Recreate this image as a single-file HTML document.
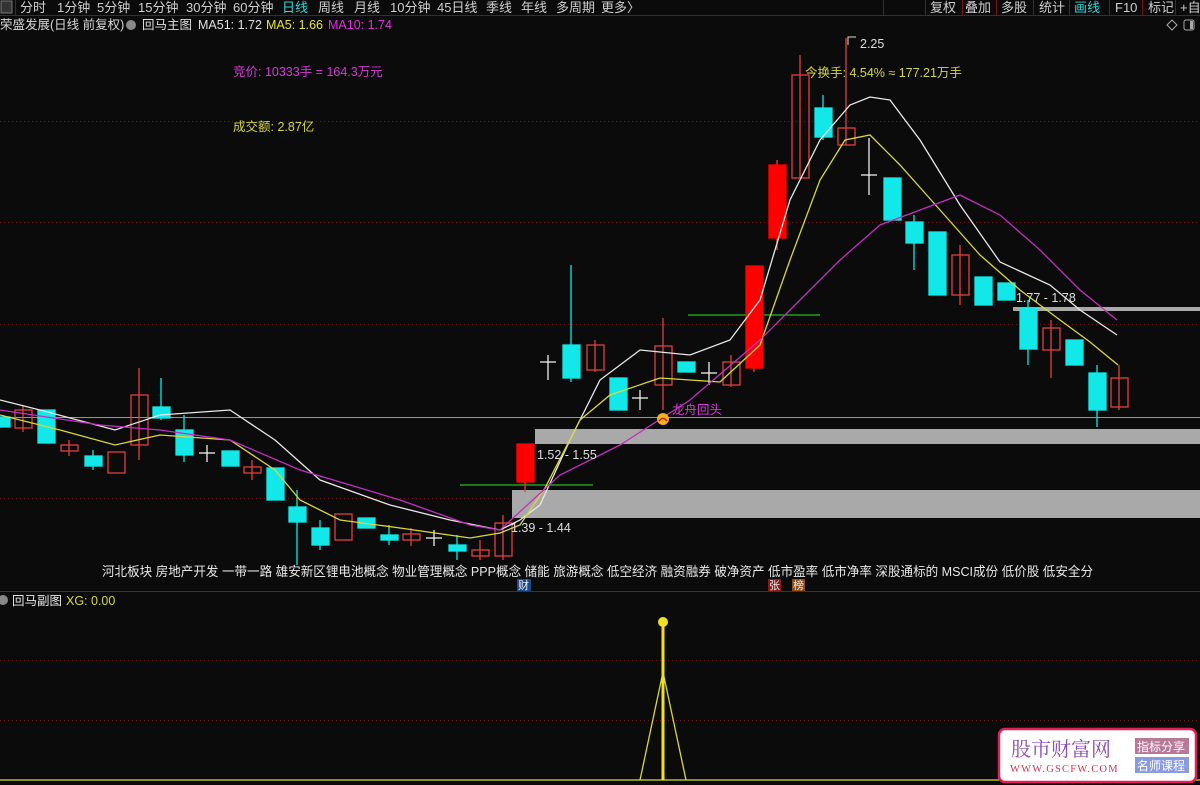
<!DOCTYPE html>
<html><head><meta charset="utf-8"><style>
body{margin:0;width:1200px;height:785px;background:#0b0b0b;overflow:hidden;font-family:"Liberation Sans","Noto Sans CJK SC",sans-serif}
svg{position:absolute;left:0;top:0}
</style></head><body>
<svg width="1200" height="785" xmlns="http://www.w3.org/2000/svg" font-family="Liberation Sans, Noto Sans CJK SC, sans-serif">
<rect width="1200" height="785" fill="#0b0b0b"/>
<rect x="0" y="0" width="1200" height="15" fill="#0b0b0b"/>
<line x1="0" y1="15.5" x2="1200" y2="15.5" stroke="#7a1018"/>
<rect x="1" y="1" width="11" height="12" fill="#333" stroke="#777"/>
<line x1="15.5" y1="0" x2="15.5" y2="15" stroke="#7a1018"/>
<g font-size="13" fill="#cfcfcf">
<text x="20" y="12">分时</text><text x="57" y="12">1分钟</text><text x="97" y="12">5分钟</text><text x="138" y="12">15分钟</text><text x="186" y="12">30分钟</text><text x="233" y="12">60分钟</text>
<text x="282" y="12" fill="#2ed8d8">日线</text><text x="318" y="12">周线</text><text x="354" y="12">月线</text><text x="390" y="12">10分钟</text><text x="437" y="12">45日线</text><text x="486" y="12">季线</text><text x="521" y="12">年线</text><text x="556" y="12">多周期</text><text x="601" y="12">更多〉</text>
<text x="930" y="12">复权</text><text x="965" y="12">叠加</text><text x="1001" y="12">多股</text><text x="1039" y="12">统计</text><text x="1074" y="12" fill="#2ed8d8">画线</text><text x="1115" y="12">F10</text><text x="1148" y="12">标记</text><text x="1180" y="12">+自</text>
</g>
<g stroke="#7a1018"><line x1="883.5" y1="0" x2="883.5" y2="15"/><line x1="962.5" y1="0" x2="962.5" y2="15"/><line x1="996.5" y1="0" x2="996.5" y2="15"/><line x1="1033.5" y1="0" x2="1033.5" y2="15"/><line x1="1069.5" y1="0" x2="1069.5" y2="15"/><line x1="1109.5" y1="0" x2="1109.5" y2="15"/><line x1="1142.5" y1="0" x2="1142.5" y2="15"/><line x1="1175.5" y1="0" x2="1175.5" y2="15"/><line x1="925.5" y1="0" x2="925.5" y2="15"/></g>
<g font-size="12.5">
<text x="0" y="29" fill="#d8d8d8">荣盛发展(日线 前复权)</text>
<circle cx="131" cy="25" r="5" fill="#888"/>
<text x="142" y="29" fill="#e0e0e0">回马主图</text>
<text x="198" y="29" fill="#e0e0e0">MA51: 1.72</text>
<text x="266" y="29" fill="#e6e63a">MA5: 1.66</text>
<text x="328" y="29" fill="#e030e0">MA10: 1.74</text>
</g>
<path d="M1172 20 l5 5 -5 5 -5 -5z" fill="none" stroke="#aaa"/>
<rect x="1184" y="20" width="10" height="10" rx="2" fill="none" stroke="#aaa"/><rect x="1190" y="21" width="3" height="8" fill="#aaa"/>
<g stroke="#6a1a1a" stroke-dasharray="1 3">
<line x1="0" y1="121.5" x2="1200" y2="121.5"/><line x1="0" y1="222.5" x2="1200" y2="222.5"/><line x1="0" y1="324.5" x2="1200" y2="324.5"/><line x1="0" y1="498.5" x2="1200" y2="498.5"/>
<line x1="0" y1="660.5" x2="1200" y2="660.5"/><line x1="0" y1="720.5" x2="1200" y2="720.5"/>
</g>
<line x1="0" y1="417.5" x2="1200" y2="417.5" stroke="#a8a030"/>
<rect x="535" y="429" width="665" height="15" fill="#a9a9a9"/>
<rect x="512" y="490" width="688" height="28" fill="#a9a9a9"/>
<rect x="1013" y="307" width="187" height="4" fill="#a9a9a9"/>
<line x1="688" y1="315" x2="820" y2="315" stroke="#1fa01f" stroke-width="1.5"/>
<line x1="460" y1="485" x2="593" y2="485" stroke="#1fa01f" stroke-width="1.5"/>
<g stroke-width="1.3">
<g fill="#12e8e8" stroke="#12e8e8">
<rect x="-4" y="417" width="14" height="10"/>
<rect x="38" y="410" width="17" height="33"/>
<line x1="93" y1="450" x2="93" y2="470"/><rect x="85" y="456" width="17" height="10"/>
<line x1="161" y1="378" x2="161" y2="420"/><rect x="153" y="407" width="17" height="11"/>
<line x1="184" y1="415" x2="184" y2="462"/><rect x="176" y="430" width="17" height="25"/>
<rect x="222" y="451" width="17" height="15"/>
<rect x="267" y="468" width="17" height="32"/>
<line x1="297" y1="490" x2="297" y2="565"/><rect x="289" y="507" width="17" height="15"/>
<line x1="320" y1="520" x2="320" y2="550"/><rect x="312" y="528" width="17" height="17"/>
<rect x="358" y="518" width="17" height="10"/>
<line x1="389" y1="525" x2="389" y2="545"/><rect x="381" y="535" width="17" height="5"/>
<line x1="457" y1="535" x2="457" y2="560"/><rect x="449" y="545" width="17" height="6"/>
<line x1="571" y1="265" x2="571" y2="382"/><rect x="563" y="345" width="17" height="33"/>
<rect x="610" y="378" width="17" height="32"/>
<rect x="678" y="362" width="17" height="10"/>
<line x1="823" y1="95" x2="823" y2="140"/><rect x="815" y="108" width="17" height="29"/>
<rect x="884" y="178" width="17" height="42"/>
<line x1="914" y1="215" x2="914" y2="270"/><rect x="906" y="222" width="17" height="21"/>
<rect x="929" y="232" width="17" height="63"/>
<rect x="975" y="277" width="17" height="28"/>
<rect x="998" y="283" width="17" height="17"/>
<line x1="1028" y1="300" x2="1028" y2="365"/><rect x="1020" y="308" width="17" height="41"/>
<rect x="1066" y="340" width="17" height="25"/>
<line x1="1097" y1="365" x2="1097" y2="427"/><rect x="1089" y="373" width="17" height="37"/>
</g>
<g fill="none" stroke="#e04040">
<line x1="23" y1="405" x2="23" y2="432"/><rect x="15" y="410" width="17" height="18"/>
<line x1="69" y1="440" x2="69" y2="456"/><rect x="61" y="445" width="17" height="6"/>
<rect x="108" y="452" width="17" height="21"/>
<line x1="139" y1="368" x2="139" y2="460"/><rect x="131" y="395" width="17" height="50"/>
<line x1="252" y1="460" x2="252" y2="480"/><rect x="244" y="467" width="17" height="6"/>
<rect x="335" y="514" width="17" height="26"/>
<line x1="411" y1="528" x2="411" y2="546"/><rect x="403" y="534" width="17" height="6"/>
<line x1="480" y1="540" x2="480" y2="560"/><rect x="472" y="550" width="17" height="6"/>
<line x1="503" y1="515" x2="503" y2="560"/><rect x="495" y="523" width="17" height="33"/>
<line x1="595" y1="340" x2="595" y2="372"/><rect x="587" y="345" width="17" height="25"/>
<line x1="663" y1="318" x2="663" y2="410"/><rect x="655" y="346" width="17" height="39"/>
<line x1="731" y1="355" x2="731" y2="387"/><rect x="723" y="362" width="17" height="23"/>
<line x1="777" y1="160" x2="777" y2="250"/>
<line x1="800" y1="55" x2="800" y2="178"/><rect x="792" y="75" width="17" height="103"/>
<line x1="846" y1="38" x2="846" y2="145"/><rect x="838" y="128" width="17" height="17"/>
<line x1="960" y1="245" x2="960" y2="305"/><rect x="952" y="255" width="17" height="40"/>
<line x1="1051" y1="320" x2="1051" y2="378"/><rect x="1043" y="328" width="17" height="22"/>
<line x1="1119" y1="365" x2="1119" y2="410"/><rect x="1111" y="378" width="17" height="29"/>
<line x1="525" y1="482" x2="525" y2="492"/><line x1="754" y1="368" x2="754" y2="372"/>
</g>
<g fill="#ff0000" stroke="#ff0000">
<rect x="517" y="444" width="17" height="38"/>
<rect x="746" y="266" width="17" height="102"/>
<rect x="769" y="165" width="17" height="73"/>
</g>
<g stroke="#eee">
<line x1="199" y1="453" x2="215" y2="453"/><line x1="207" y1="445" x2="207" y2="462"/>
<line x1="426" y1="538" x2="442" y2="538"/><line x1="434" y1="530" x2="434" y2="546"/>
<line x1="540" y1="362" x2="556" y2="362"/><line x1="548" y1="355" x2="548" y2="380"/>
<line x1="632" y1="398" x2="648" y2="398"/><line x1="640" y1="390" x2="640" y2="410"/>
<line x1="701" y1="373" x2="717" y2="373"/><line x1="709" y1="362" x2="709" y2="385"/>
<line x1="861" y1="175" x2="877" y2="175"/><line x1="869" y1="138" x2="869" y2="195"/>
</g>
</g>
<g fill="none" stroke-width="1.3">
<polyline stroke="#e8e8e8" points="0,400 40,410 115,430 160,415 230,410 275,440 320,480 390,505 450,520 500,530 520,520 540,505 570,440 600,380 640,350 690,355 730,340 760,300 790,200 820,140 850,105 870,97 890,100 920,140 960,205 1000,262 1050,285 1080,310 1117,335"/>
<polyline stroke="#d8d83a" points="0,415 60,430 115,445 160,435 230,440 275,470 300,500 340,520 400,528 470,538 500,533 520,525 545,488 580,420 610,395 660,378 720,382 760,345 790,260 820,180 845,140 870,135 900,165 940,210 980,255 1020,290 1060,320 1090,342 1118,365"/>
<polyline stroke="#c030c0" points="0,410 100,425 160,430 230,440 300,470 400,500 470,525 500,530 560,475 620,445 690,400 760,340 800,300 840,260 880,225 920,210 960,195 1000,215 1040,250 1080,290 1117,320"/>
</g>
<g font-size="12.5">
<text x="233" y="76" fill="#d838d8">竞价: 10333手 = 164.3万元</text>
<text x="233" y="131" fill="#d8d83a">成交额: 2.87亿</text>
<text x="805" y="77" fill="#d8d83a">今换手: 4.54% ≈ 177.21万手</text>
<text x="860" y="48" fill="#ddd">2.25</text>
<path d="M848 45 l0 -8 l8 0" fill="none" stroke="#ddd"/>
<text x="1016" y="302" fill="#ddd">1.77 - 1.78</text>
<text x="537" y="459" fill="#ddd">1.52 - 1.55</text>
<text x="511" y="532" fill="#ddd">1.39 - 1.44</text>
<text x="672" y="414" fill="#d838d8">龙舟回头</text>
</g>
<circle cx="663" cy="419" r="6" fill="#f0b020"/><path d="M659 421 q4 -5 8 0" fill="none" stroke="#c02000" stroke-width="1.5"/>
<text x="102" y="576" font-size="13" fill="#e8e8e8" textLength="991" lengthAdjust="spacingAndGlyphs">河北板块 房地产开发 一带一路 雄安新区锂电池概念 物业管理概念 PPP概念 储能 旅游概念 低空经济 融资融券 破净资产 低市盈率 低市净率 深股通标的 MSCI成份 低价股 低安全分</text>
<rect x="517" y="579" width="14" height="12" fill="#1a4a8a"/><text x="518" y="589" font-size="11" fill="#eee">财</text>
<rect x="768" y="579" width="13" height="12" fill="#8a1a1a"/><text x="769" y="589" font-size="11" fill="#eee">张</text>
<rect x="792" y="579" width="13" height="12" fill="#8a4a1a"/><text x="793" y="589" font-size="11" fill="#eee">榜</text>
<line x1="0" y1="591.5" x2="1200" y2="591.5" stroke="#8a1018"/>
<circle cx="3" cy="600" r="5" fill="#888"/>
<text x="12" y="605" font-size="12.5" fill="#e8e8e8">回马副图</text>
<text x="66" y="605" font-size="12.5" fill="#d8d83a">XG: 0.00</text>
<line x1="0" y1="780" x2="1200" y2="780" stroke="#d8d83a" stroke-width="1.3"/>
<polyline points="640,780 663,672 686,780" fill="none" stroke="#d8d83a" stroke-width="1.3"/>
<line x1="663" y1="622" x2="663" y2="780" stroke="#f0e020" stroke-width="3"/>
<circle cx="663" cy="622" r="5" fill="#f0e020"/>
<rect x="999" y="729" width="197" height="53" rx="6" fill="#fff" stroke="#e0205a" stroke-width="2.5"/>
<text x="1011" y="756" font-size="20" fill="#8a4ab0" font-family="Noto Serif CJK SC, serif">股市财富网</text>
<text x="1010" y="772" font-size="10.5" fill="#d83050" font-family="Liberation Serif, serif" letter-spacing="1.2">WWW.GSCFW.COM</text>
<rect x="1135" y="738" width="54" height="16" fill="#b87898"/><text x="1137" y="751" font-size="12" fill="#fff">指标分享</text>
<rect x="1135" y="757" width="54" height="16" fill="#8a9ae0"/><text x="1137" y="770" font-size="12" fill="#fff">名师课程</text>
</svg>
</body></html>
